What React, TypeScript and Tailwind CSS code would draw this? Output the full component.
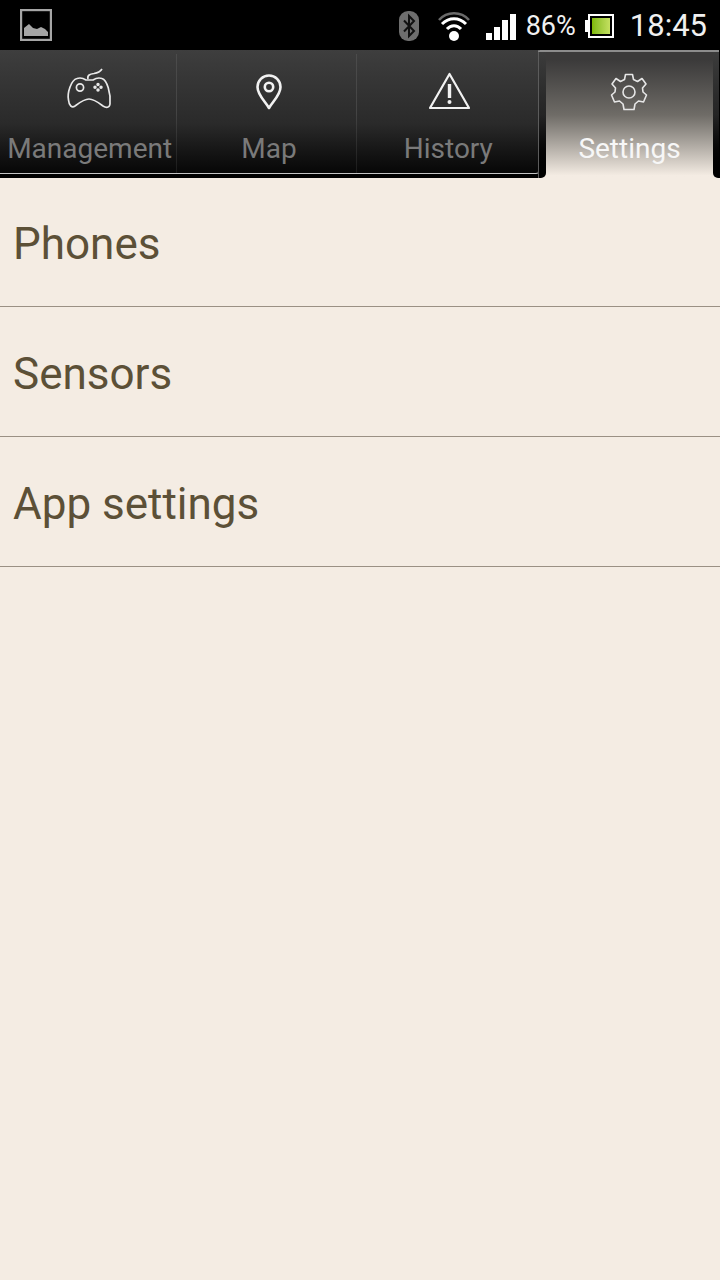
import React from 'react';

const Font = '[font-family:Roboto,sans-serif]';

function Tab({ label, icon, sep }: { label: string; icon: React.ReactNode; sep?: boolean }) {
  return (
    <div className="w-[180px] relative flex flex-col items-center">
      <div className="h-[60px] flex items-end justify-center">{icon}</div>
      <div className="mt-[19px] text-[28px] leading-[40px] text-[#7a7a7a] whitespace-nowrap">{label}</div>
      {sep && <div className="absolute right-[2px] top-[4px] bottom-0 w-px bg-gradient-to-b from-[#4c4c4c] via-[#444444] to-[#1a1a1a]" />}
    </div>
  );
}

export default function App() {
  return (
    <div className={`w-[720px] h-[1280px] bg-[#f4ece3] flex flex-col overflow-hidden ${Font}`}>
      {/* status bar */}
      <div className="h-[50px] bg-black flex items-center shrink-0">
        <svg width="32" height="32" viewBox="0 0 32 32" className="ml-[20px]">
          <rect x="1" y="1" width="30" height="30" fill="none" stroke="#a6a6a6" strokeWidth="2.4" />
          <path d="M4 27V19L9 15L13 19L17 20L21 18L25 20L28 23V27Z" fill="#a6a6a6" />
        </svg>
        <div className="ml-auto flex items-center pt-[1px]">
          <svg width="20" height="30" viewBox="0 0 20 30">
            <rect x="0" y="0" width="20" height="30" rx="9" fill="#6e6e6e" />
            <path d="M5 9.5L15 20L10 25V5L15 10L5 20.5" fill="none" stroke="#111" strokeWidth="2" />
          </svg>
          <svg width="32" height="30" viewBox="0 0 32 30" className="ml-[19px]">
            <path d="M1 9C9 0 23 0 31 9" fill="none" stroke="#6a6a6a" strokeWidth="2.6" />
            <path d="M4 13C11 6 21 6 28 13" fill="none" stroke="#fff" strokeWidth="3" />
            <path d="M9 18C13 13.5 19 13.5 23 18" fill="none" stroke="#fff" strokeWidth="3" />
            <circle cx="16" cy="25" r="5" fill="#fff" />
          </svg>
          <div className="ml-[16px] flex items-end gap-[2px] h-[28px]">
            <div className="w-[6px] h-[7px] bg-white" />
            <div className="w-[6px] h-[13px] bg-white" />
            <div className="w-[6px] h-[20px] bg-white" />
            <div className="w-[6px] h-[26px] bg-white" />
          </div>
          <span className="ml-[10px] text-[27px] leading-[50px] text-[#f0f0f0] pt-[1px]">86%</span>
          <div className="ml-[9px] flex items-center">
            <div className="w-[3px] h-[12px] bg-white" />
            <div className="w-[26px] h-[24px] border-[2px] border-white p-[2px]">
              <div className="w-full h-full bg-gradient-to-r from-[#7fb800] to-[#c5e060]" />
            </div>
          </div>
          <span className="ml-[16px] mr-[13px] text-[31px] leading-[50px] text-[#f0f0f0] pt-[1px]">18:45</span>
        </div>
      </div>

      {/* tab bar */}
      <div className="h-[128px] shrink-0 flex bg-black">
        <div className="w-[539px] h-[124px] flex bg-gradient-to-b from-[#3e3e3e] via-[#2a2a2a] via-60% to-[#070707] border-b border-r border-b-[#c4c4c4] border-r-[#5c5c5c] rounded-br-[3px]">
          <Tab
            label="Management"
            sep
            icon={
              <svg width="46" height="42" viewBox="0 0 46 42" fill="none" stroke="#e8e8e8" strokeWidth="1.7" className="-ml-[2px]">
                <path d="M2.5 32C1 25 5 12 11 10.5C14 9.5 17 10 20 12H27C30 10 33 9.5 36 10.5C41 12 45 25 44 36C43.5 40 40 40 37 38C33 35 28 31 23 31C18 31 13 35 9 38C6 40 3 38 2.5 32Z" />
                <circle cx="14" cy="19.5" r="3.6" />
                <circle cx="32" cy="16.5" r="0.9" fill="#e8e8e8" />
                <circle cx="32" cy="22" r="0.9" fill="#e8e8e8" />
                <circle cx="29" cy="19.3" r="0.9" fill="#e8e8e8" />
                <circle cx="35" cy="19.3" r="0.9" fill="#e8e8e8" />
                <path d="M22 11C21 7 24 6 28 5.5C31 5 34 4 36 1" />
              </svg>
            }
          />
          <Tab
            label="Map"
            sep
            icon={
              <svg width="26" height="36" viewBox="0 0 26 36" fill="none" stroke="#f2f2f2" strokeWidth="2.6">
                <path d="M13 34C9 27 1.5 21 1.5 13A11.5 11.5 0 0 1 24.5 13C24.5 21 17 27 13 34Z" strokeLinejoin="round" />
                <circle cx="13" cy="13" r="4.2" />
              </svg>
            }
          />
          <Tab
            label="History"
            icon={
              <svg width="43" height="38" viewBox="0 0 42 38" fill="none" className="ml-[2px]">
                <path d="M21 2L40.5 36H1.5Z" stroke="#f2f2f2" strokeWidth="2.2" strokeLinejoin="round" />
                <path d="M21 12V26" stroke="#f2f2f2" strokeWidth="3.4" />
                <circle cx="21" cy="30" r="2" fill="#f2f2f2" />
              </svg>
            }
          />
        </div>

        {/* active tab */}
        <div className="w-[181px] h-[128px] flex flex-col rounded-tl-[3px] -ml-px">
          <div className="h-[2px] bg-[#8c8c8c] rounded-tl-[3px]" />
          <div className="flex-1 flex bg-gradient-to-b from-[#3b3a3a] from-[6%] via-[#6f6c67] via-[50%] to-[#f4ece3] to-[98%]">
            <div className="w-[8px] bg-gradient-to-b from-[#3c3c3c] via-[#242424] via-50% to-[#000000] rounded-br-[5px] border-l border-[#5c5c5c]" />
            <div className="flex-1 flex flex-col items-center">
              <svg width="38" height="38" viewBox="0 0 38 38" fill="none" stroke="#e6e6e6" strokeWidth="1.6" className="mt-[21px] -ml-[2px]" strokeLinejoin="round">
                <path d="M15.5 1.5H22.5L23.5 6.5L27.5 8.5L32 5.5L36 11L32.5 15L33 19L36.5 22L33.5 29L28.5 28L25 31L24 36.5H14L13 31L9.5 28L4.5 29L1.5 22L5 19L5.5 15L2 11L6 5.5L10.5 8.5L14.5 6.5Z" />
                <circle cx="19" cy="19" r="6" />
              </svg>
              <div className="mt-[18px] text-[28px] leading-[40px] text-[#f7f7f7]">Settings</div>
            </div>
            <div className="w-[6px] bg-gradient-to-b from-[#3c3c3c] via-[#242424] via-50% to-[#000000] rounded-bl-[5px]" />
          </div>
        </div>
      </div>

      {/* list */}
      <div className="flex flex-col text-[#5c5037] text-[44px]">
        <div className="h-[129px] pl-[13px] pt-[4px] flex items-center border-b border-[#9a9084]">Phones</div>
        <div className="h-[130px] pl-[13px] pt-[4px] flex items-center border-b border-[#9a9084]">Sensors</div>
        <div className="h-[130px] pl-[13px] pt-[4px] flex items-center border-b border-[#9a9084]">App settings</div>
      </div>
    </div>
  );
}
